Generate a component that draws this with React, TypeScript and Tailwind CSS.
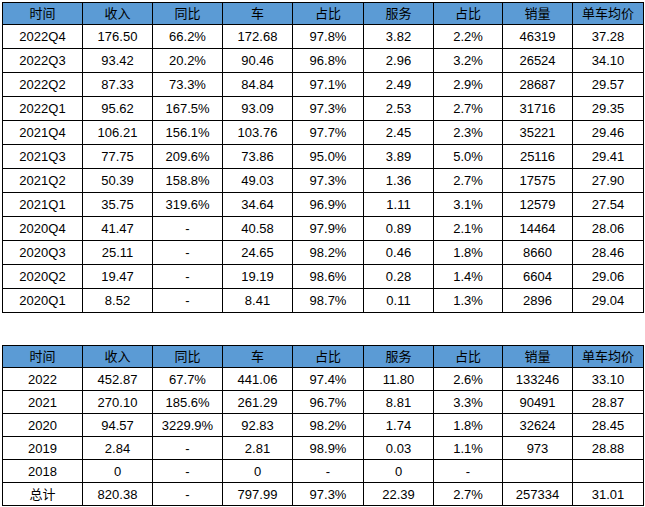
const headers = ["时间", "收入", "同比", "车", "占比", "服务", "占比", "销量", "单车均价"];

const quarterly = [
  ["2022Q4", "176.50", "66.2%", "172.68", "97.8%", "3.82", "2.2%", "46319", "37.28"],
  ["2022Q3", "93.42", "20.2%", "90.46", "96.8%", "2.96", "3.2%", "26524", "34.10"],
  ["2022Q2", "87.33", "73.3%", "84.84", "97.1%", "2.49", "2.9%", "28687", "29.57"],
  ["2022Q1", "95.62", "167.5%", "93.09", "97.3%", "2.53", "2.7%", "31716", "29.35"],
  ["2021Q4", "106.21", "156.1%", "103.76", "97.7%", "2.45", "2.3%", "35221", "29.46"],
  ["2021Q3", "77.75", "209.6%", "73.86", "95.0%", "3.89", "5.0%", "25116", "29.41"],
  ["2021Q2", "50.39", "158.8%", "49.03", "97.3%", "1.36", "2.7%", "17575", "27.90"],
  ["2021Q1", "35.75", "319.6%", "34.64", "96.9%", "1.11", "3.1%", "12579", "27.54"],
  ["2020Q4", "41.47", "-", "40.58", "97.9%", "0.89", "2.1%", "14464", "28.06"],
  ["2020Q3", "25.11", "-", "24.65", "98.2%", "0.46", "1.8%", "8660", "28.46"],
  ["2020Q2", "19.47", "-", "19.19", "98.6%", "0.28", "1.4%", "6604", "29.06"],
  ["2020Q1", "8.52", "-", "8.41", "98.7%", "0.11", "1.3%", "2896", "29.04"],
];

const yearly = [
  ["2022", "452.87", "67.7%", "441.06", "97.4%", "11.80", "2.6%", "133246", "33.10"],
  ["2021", "270.10", "185.6%", "261.29", "96.7%", "8.81", "3.3%", "90491", "28.87"],
  ["2020", "94.57", "3229.9%", "92.83", "98.2%", "1.74", "1.8%", "32624", "28.45"],
  ["2019", "2.84", "-", "2.81", "98.9%", "0.03", "1.1%", "973", "28.88"],
  ["2018", "0", "-", "0", "-", "0", "-", "", ""],
  ["总计", "820.38", "-", "797.99", "97.3%", "22.39", "2.7%", "257334", "31.01"],
];

const DataTable = ({ rows, rowClass }: { rows: string[][]; rowClass: string }) => {
  return (
    <table className="table-fixed border-collapse w-[641px] text-[13px] text-black">
      <colgroup>
        <col className="w-[80px]" />
        <col className="w-[70px]" />
        <col className="w-[70px]" />
        <col className="w-[70px]" />
        <col className="w-[71px]" />
        <col className="w-[70px]" />
        <col className="w-[69px]" />
        <col className="w-[70px]" />
        <col className="w-[71px]" />
      </colgroup>
      <thead>
        <tr className="h-[22px] bg-[#5b9bd5]">
          {headers.map((h, i) => (
            <th key={i} className="border border-black font-normal text-center p-0 leading-none">
              {h}
            </th>
          ))}
        </tr>
      </thead>
      <tbody>
        {rows.map((row, r) => (
          <tr key={r} className={rowClass}>
            {row.map((cell, c) => (
              <td key={c} className="border border-black text-center p-0 leading-none">
                {cell}
              </td>
            ))}
          </tr>
        ))}
      </tbody>
    </table>
  );
};

const App = () => {
  return (
    <div
      className="w-[645px] h-[507px] bg-white pl-[2px] pt-[2px]"
      style={{ fontFamily: '"Liberation Sans", "Noto Sans CJK SC", sans-serif' }}
    >
      <DataTable rows={quarterly} rowClass="h-[24px]" />
      <div className="h-[32px]" />
      <DataTable rows={yearly} rowClass="h-[23px]" />
    </div>
  );
};

export default App;
